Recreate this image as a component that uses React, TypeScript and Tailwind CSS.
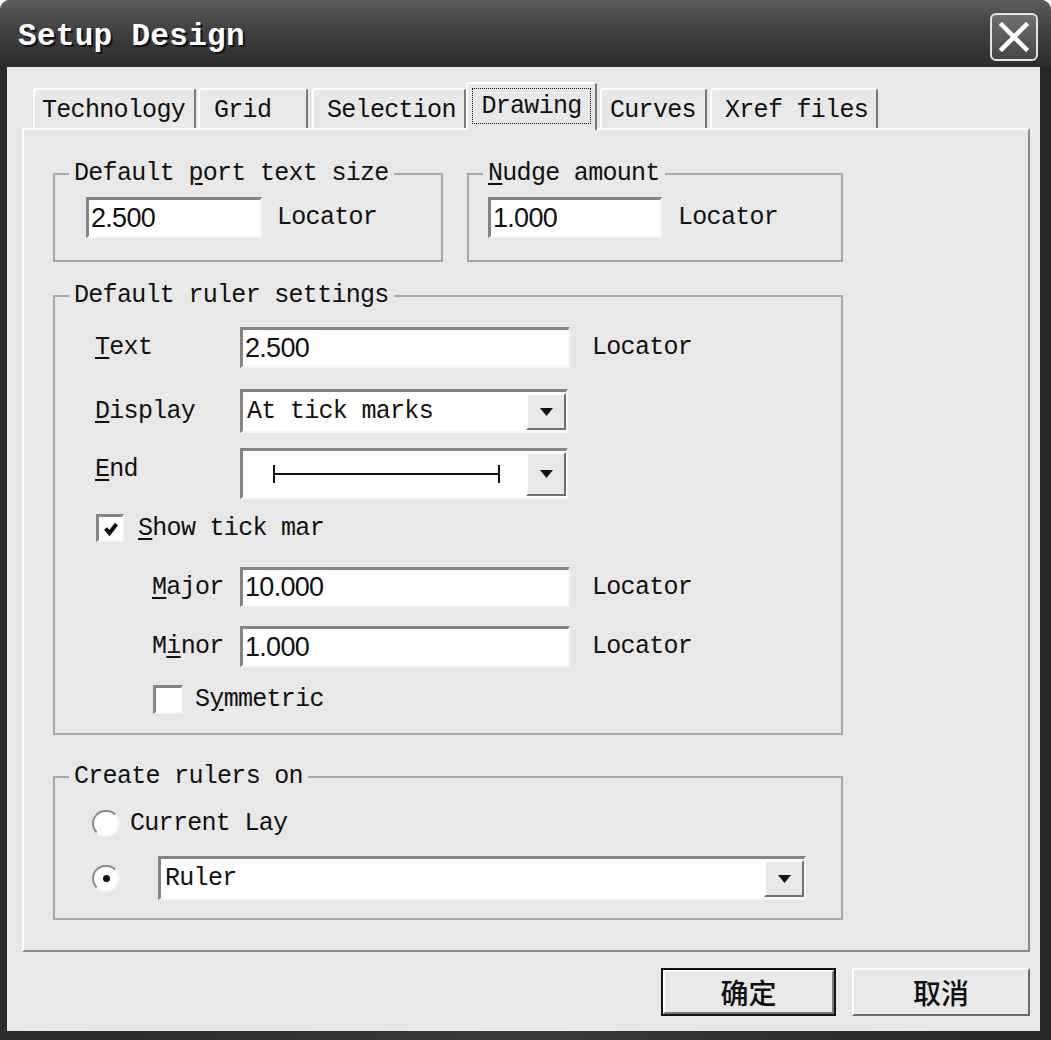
import React from 'react';

// Setup Design dialog (classic Windows look, Drawing tab)

const Key = ({ children }: { children: React.ReactNode }) => <span className="underline underline-offset-[3px]">{children}</span>;

const Field = ({ value, className = '' }: { value: string; className?: string }) => (
    <div
        className={`bg-white border-t-[3px] border-l-[3px] border-t-[#858585] border-l-[#858585] border-r-2 border-b-2 border-r-[#f6f6f6] border-b-[#f6f6f6] flex items-center pl-[2px] font-['Liberation_Sans',sans-serif] text-[27px] text-[#111] ${className}`}
    >
        {value}
    </div>
);

const DropBtn = () => (
    <div className="w-[40px] h-full bg-[#e8e8e8] border-t-2 border-l-2 border-t-white border-l-white border-r-2 border-b-2 border-r-[#6f6f6f] border-b-[#6f6f6f] flex items-center justify-center">
        <svg width="13" height="8" viewBox="0 0 13 8">
            <path d="M0 0h13L6.5 8z" fill="#111" />
        </svg>
    </div>
);

const Select = ({ children, className = '' }: { children: React.ReactNode; className?: string }) => (
    <div
        className={`bg-white border-t-[3px] border-l-[3px] border-t-[#858585] border-l-[#858585] border-r-2 border-b-2 border-r-[#f6f6f6] border-b-[#f6f6f6] flex items-stretch py-[1px] ${className}`}
    >
        <div className="flex-1 flex items-center pl-[4px]">{children}</div>
        <DropBtn />
    </div>
);

const Check = ({ checked, className = '' }: { checked?: boolean; className?: string }) => (
    <div
        className={`bg-white border-t-[3px] border-l-[3px] border-t-[#858585] border-l-[#858585] border-r-2 border-b-2 border-r-[#f6f6f6] border-b-[#f6f6f6] flex items-center justify-center ${className}`}
    >
        {checked && (
            <svg width="16" height="16" viewBox="0 0 16 16">
                <path d="M2.5 7.5 L6.5 12 L13.5 3" stroke="#111" strokeWidth="4" fill="none" />
            </svg>
        )}
    </div>
);

const Radio = ({ selected }: { selected?: boolean }) => (
    <div className="w-[28px] h-[27px] rounded-full bg-white border-2 border-t-[#8a8a8a] border-l-[#8a8a8a] border-r-[#f4f4f4] border-b-[#f4f4f4] flex items-center justify-center">
        {selected && <div className="w-[7px] h-[7px] rounded-full bg-[#111]" />}
    </div>
);

const Locator = ({ className = '' }: { className?: string }) => <span className={className}>Locator</span>;

const tabs = [
    { name: 'Technology', cls: 'w-[163px] pl-[7px]' },
    { name: 'Grid', cls: 'w-[110px] ml-[2px] pl-[14px]' },
    { name: 'Selection', cls: 'w-[154px] ml-[4px] pl-[13px]' },
];
const tabsAfter = [
    { name: 'Curves', cls: 'w-[107px] ml-[3px] pl-[8px]' },
    { name: 'Xref files', cls: 'w-[168px] ml-[3px] pl-[13px]' },
];

const Tab = ({ name, cls }: { name: string; cls: string }) => (
    <div
        className={`h-[40px] flex items-center pt-[2px] rounded-t-[3px] border-t-2 border-l-2 border-t-white border-l-white border-r-2 border-r-[#7a7a7a] bg-[#e8e8e8] ${cls}`}
    >
        {name}
    </div>
);

export default function App() {
    return (
        <div className="w-[1051px] h-[1040px] bg-white font-['Liberation_Mono',monospace] text-[25px] tracking-[-0.7px] text-[#111] leading-none">
            <div className="w-full h-full flex flex-col rounded-t-[10px] overflow-hidden bg-[#333]">
                {/* Title bar */}
                <div className="h-[67px] shrink-0 flex items-center justify-between pt-[6px] pl-[18px] pr-[13px] bg-gradient-to-b from-[#5c5c5c] via-[#3e3e3e] to-[#2c2c2c]">
                    <span className="text-white font-bold text-[31px] tracking-[0.3px] [text-shadow:2px_2px_0_#111]">
                        Setup Design
                    </span>
                    <div className="w-[48px] h-[48px] rounded-[6px] border-2 border-[#e4e4e4] bg-gradient-to-b from-[#707070] to-[#474747] flex items-center justify-center">
                        <svg width="30" height="30" viewBox="0 0 30 30">
                            <path d="M3 3 L27 27 M27 3 L3 27" stroke="white" strokeWidth="4.5" strokeLinecap="square" />
                        </svg>
                    </div>
                </div>

                {/* Frame + client */}
                <div className="flex-1 flex pl-[7px] pr-[11px] pb-[9px] bg-gradient-to-r from-[#2a2a2a] via-[#3a3a3a] to-[#262626]">
                    <div className="flex-1 bg-[#e8e8e8] flex flex-col pt-[15px] pl-[15px] pr-[10px] pb-[15px]">
                        {/* Tabs */}
                        <div className="flex items-end pl-[11px] h-[46px]">
                            {tabs.map((t) => (
                                <Tab key={t.name} name={t.name} cls={t.cls} />
                            ))}
                            <div className="relative z-10 w-[131px] h-[48px] -mb-[2px] rounded-t-[3px] border-t-2 border-l-2 border-t-white border-l-white border-r-2 border-r-[#7a7a7a] bg-[#e8e8e8] pt-[4px] px-[4px]">
                                <div className="h-[36px] border border-dotted border-[#111] flex items-center justify-center">
                                    Drawing
                                </div>
                            </div>
                            {tabsAfter.map((t) => (
                                <Tab key={t.name} name={t.name} cls={t.cls} />
                            ))}
                        </div>

                        {/* Panel */}
                        <div className="h-[824px] border-t-2 border-l-2 border-t-white border-l-white border-r-2 border-b-2 border-r-[#8a8a8a] border-b-[#8a8a8a] pt-[32px] pl-[29px]">
                            {/* Top groups */}
                            <div className="flex">
                                <fieldset className="w-[390px] h-[100px] border-2 border-[#a8a8a8]">
                                    <legend className="ml-[14px] px-[5px] leading-[24px]">
                                        Default <Key>p</Key>ort text size
                                    </legend>
                                    <div className="flex items-center pl-[31px] mt-[11px]">
                                        <Field value="2.500" className="w-[176px] h-[41px]" />
                                        <Locator className="ml-[15px]" />
                                    </div>
                                </fieldset>
                                <fieldset className="w-[376px] h-[100px] ml-[24px] border-2 border-[#a8a8a8]">
                                    <legend className="ml-[14px] px-[5px] leading-[24px]">
                                        <Key>N</Key>udge amount
                                    </legend>
                                    <div className="flex items-center pl-[19px] mt-[11px]">
                                        <Field value="1.000" className="w-[174px] h-[41px]" />
                                        <Locator className="ml-[16px]" />
                                    </div>
                                </fieldset>
                            </div>

                            {/* Ruler settings */}
                            <fieldset className="w-[790px] h-[451px] mt-[22px] border-2 border-[#a8a8a8]">
                                <legend className="ml-[14px] px-[5px] leading-[24px]">Default ruler settings</legend>
                                <div className="flex flex-col pl-[40px]">
                                    <div className="flex items-center mt-[19px]">
                                        <span className="w-[145px]">
                                            <Key>T</Key>ext
                                        </span>
                                        <Field value="2.500" className="w-[330px] h-[41px]" />
                                        <Locator className="ml-[22px]" />
                                    </div>
                                    <div className="flex items-center mt-[21px]">
                                        <span className="w-[145px]">
                                            <Key>D</Key>isplay
                                        </span>
                                        <Select className="w-[328px] h-[44px]">At tick marks</Select>
                                    </div>
                                    <div className="flex items-center mt-[15px]">
                                        <span className="w-[145px] -mt-[8px]">
                                            <Key>E</Key>nd
                                        </span>
                                        <Select className="w-[328px] h-[51px]">
                                            <svg width="232" height="20" viewBox="0 0 232 20" className="ml-[26px]">
                                                <path d="M1 1 V19 M1 10 H226 M226 1 V19" stroke="#111" strokeWidth="2" fill="none" />
                                            </svg>
                                        </Select>
                                    </div>
                                    <div className="flex items-center mt-[15px] ml-[1px]">
                                        <Check checked className="w-[28px] h-[28px]" />
                                        <span className="ml-[14px]">
                                            <Key>S</Key>how tick mar
                                        </span>
                                    </div>
                                    <div className="flex items-center mt-[25px]">
                                        <span className="w-[88px] ml-[57px]">
                                            <Key>M</Key>ajor
                                        </span>
                                        <Field value="10.000" className="w-[330px] h-[40px]" />
                                        <Locator className="ml-[22px]" />
                                    </div>
                                    <div className="flex items-center mt-[19px]">
                                        <span className="w-[88px] ml-[57px]">
                                            M<Key>i</Key>nor
                                        </span>
                                        <Field value="1.000" className="w-[330px] h-[41px]" />
                                        <Locator className="ml-[22px]" />
                                    </div>
                                    <div className="flex items-center mt-[18px] ml-[58px]">
                                        <Check className="w-[30px] h-[29px]" />
                                        <span className="ml-[12px]">
                                            S<Key>y</Key>mmetric
                                        </span>
                                    </div>
                                </div>
                            </fieldset>

                            {/* Create rulers on */}
                            <fieldset className="w-[790px] h-[155px] mt-[30px] border-2 border-[#a8a8a8]">
                                <legend className="ml-[14px] px-[5px] leading-[24px]">Create rulers on</legend>
                                <div className="flex flex-col pl-[37px]">
                                    <div className="flex items-center mt-[21px]">
                                        <Radio />
                                        <span className="ml-[10px]">Current Lay</span>
                                    </div>
                                    <div className="flex items-center mt-[19px]">
                                        <Radio selected />
                                        <Select className="w-[648px] h-[44px] ml-[38px]">Ruler</Select>
                                    </div>
                                </div>
                            </fieldset>
                        </div>

                        {/* Buttons */}
                        <div className="flex justify-end mt-[16px] font-['Noto_Sans_CJK_SC',sans-serif] text-[28px] font-medium tracking-normal">
                            <div className="w-[175px] h-[48px] border-2 border-[#111]">
                                <div className="h-full border-t-2 border-l-2 border-t-white border-l-white border-r-2 border-b-2 border-r-[#7a7a7a] border-b-[#7a7a7a] flex items-center justify-center">
                                    确定
                                </div>
                            </div>
                            <div className="w-[178px] h-[48px] ml-[16px] border-t-2 border-l-2 border-t-white border-l-white border-r-2 border-b-2 border-r-[#6a6a6a] border-b-[#6a6a6a] flex items-center justify-center">
                                取消
                            </div>
                        </div>
                    </div>
                </div>
            </div>
        </div>
    );
}
